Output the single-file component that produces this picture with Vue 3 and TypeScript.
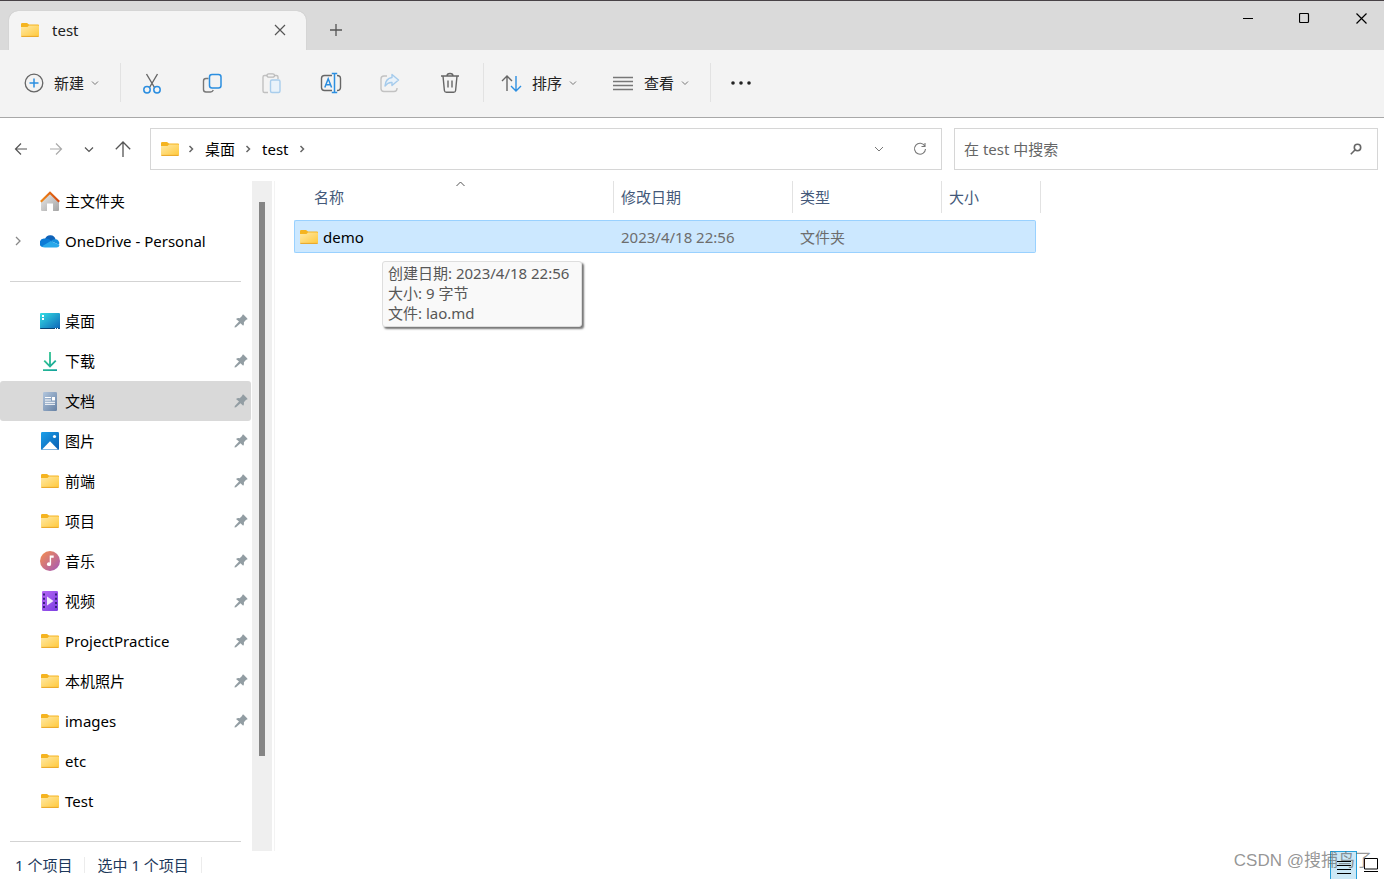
<script setup lang="ts">
import { ref } from 'vue'

interface Place {
  label: string
  icon: string
  pinned: boolean
}

const places: Place[] = [
  { label: '桌面', icon: 'desktop', pinned: true },
  { label: '下载', icon: 'download', pinned: true },
  { label: '文档', icon: 'document', pinned: true },
  { label: '图片', icon: 'picture', pinned: true },
  { label: '前端', icon: 'folder', pinned: true },
  { label: '项目', icon: 'folder', pinned: true },
  { label: '音乐', icon: 'music', pinned: true },
  { label: '视频', icon: 'video', pinned: true },
  { label: 'ProjectPractice', icon: 'folder', pinned: true },
  { label: '本机照片', icon: 'folder', pinned: true },
  { label: 'images', icon: 'folder', pinned: true },
  { label: 'etc', icon: 'folder', pinned: false },
  { label: 'Test', icon: 'folder', pinned: false },
]

const tools = [
  { id: 'cut', label: '剪切', disabled: false },
  { id: 'copy', label: '复制', disabled: false },
  { id: 'paste', label: '粘贴', disabled: true },
  { id: 'rename', label: '重命名', disabled: false },
  { id: 'share', label: '共享', disabled: true },
  { id: 'trash', label: '删除', disabled: false },
]

const current = ref('文档')
const query = ref('')
</script>

<template>
  <div class="window">
    <svg class="sprite" aria-hidden="true">
      <defs>
        <linearGradient id="g-folder" x1="0" y1="0" x2="1" y2="1">
          <stop offset="0" stop-color="#ffe9a6" />
          <stop offset="1" stop-color="#ffc93c" />
        </linearGradient>
        <linearGradient id="g-desktop" x1="0" y1="0" x2="1" y2="1">
          <stop offset="0" stop-color="#35dfe4" />
          <stop offset="1" stop-color="#0d63b8" />
        </linearGradient>
        <linearGradient id="g-download" x1="0" y1="0" x2="1" y2="1">
          <stop offset="0" stop-color="#3ccf8e" />
          <stop offset="1" stop-color="#109f9c" />
        </linearGradient>
        <linearGradient id="g-document" x1="0" y1="0" x2="1" y2="1">
          <stop offset="0" stop-color="#b2c6dd" />
          <stop offset="1" stop-color="#6681a4" />
        </linearGradient>
        <linearGradient id="g-picture" x1="0" y1="0" x2="1" y2="1">
          <stop offset="0" stop-color="#1ca0ea" />
          <stop offset="1" stop-color="#085cb0" />
        </linearGradient>
        <linearGradient id="g-music" x1="0" y1="0" x2="1" y2="1">
          <stop offset="0.1" stop-color="#ef8a57" />
          <stop offset="0.9" stop-color="#ab5db0" />
        </linearGradient>
        <linearGradient id="g-video" x1="0" y1="0" x2="1" y2="1">
          <stop offset="0" stop-color="#b566f5" />
          <stop offset="1" stop-color="#7b3fe0" />
        </linearGradient>
        <linearGradient id="g-home" x1="0" y1="0" x2="1" y2="1">
          <stop offset="0" stop-color="#ebebeb" />
          <stop offset="1" stop-color="#a4a4a4" />
        </linearGradient>
        <linearGradient id="g-roof" x1="0" y1="0" x2="1" y2="0">
          <stop offset="0" stop-color="#f08a18" />
          <stop offset="1" stop-color="#d4470f" />
        </linearGradient>
      </defs>
      <symbol id="i-folder" viewBox="0 0 20 20">
        <path d="M1 4.200Q1 3 2.200 3H7l2 1.500h9q1 0 1 1V8H1z" fill="#f5b420" />
        <path d="M1 7h6.500l1.500-1.500h9q1 0 1 1v9q0 1-1 1H2q-1 0-1-1z" fill="url(#g-folder)" />
        <path d="M1.300 16.400h17.400" stroke="#e9a420" stroke-width="1" />
      </symbol>
      <symbol id="i-desktop" viewBox="0 0 20 20">
        <rect y="2" width="20" height="16" rx="1" fill="url(#g-desktop)" />
        <path d="M0 17h20q0 1-1 1H1q-1 0-1-1z" fill="#0a4372" />
        <path d="M2 4h2v2H2zM2 7h2v2H2zM15 17h1v1h-1zM17 17h1v1h-1z" fill="#fff" />
      </symbol>
      <symbol id="i-download" viewBox="0 0 20 20">
        <path d="M9.100 1h1.800v12.200l4.200-4.200 1.300 1.300L10 16.700 3.600 10.300 4.900 9l4.200 4.200zM3 18.300h14V20H3z" fill="url(#g-download)" />
      </symbol>
      <symbol id="i-document" viewBox="0 0 20 20">
        <rect x="3" y="1" width="14" height="19" rx="1.200" fill="url(#g-document)" />
        <path d="M5 6.500h6M5 9h6M5 11.300h10M5 13.300h10" stroke="#fff" stroke-width="1" />
        <path d="M12 6h3v3.500h-3z" fill="#fff" />
      </symbol>
      <symbol id="i-picture" viewBox="0 0 20 20">
        <rect x="1" y="1" width="18" height="18" rx="1.200" fill="url(#g-picture)" />
        <path d="M2 18.500 10 10.200l8 8.300z" fill="#fff" />
        <circle cx="14.500" cy="5.500" r="1.600" fill="#fff" />
      </symbol>
      <symbol id="i-music" viewBox="0 0 20 20">
        <circle cx="10" cy="10" r="10" fill="url(#g-music)" />
        <path d="M9.700 4.500h4v2.200h-2.600v6.500a2.100 1.900 0 1 1-1.400-1.800z" fill="#fff" />
      </symbol>
      <symbol id="i-video" viewBox="0 0 20 20">
        <rect x="2" width="16" height="20" rx="1.200" fill="url(#g-video)" />
        <path d="M3 2.500h2v2H3zM3 6.700h2v2H3zM3 10.900h2v2H3zM3 15.100h2v2H3zM15 2.500h2v2h-2zM15 6.700h2v2h-2zM15 10.900h2v2h-2zM15 15.100h2v2h-2z" fill="#3b2080" />
        <path d="M7 5.500v9l6.500-4.500z" fill="#f2ecfb" />
      </symbol>
      <symbol id="i-home" viewBox="0 0 20 20">
        <path d="M1 10 10 2l9 8v9q0 1-1 1h-5v-7.500H7V20H2q-1 0-1-1z" fill="url(#g-home)" />
        <path d="M.8 10.800 10 1.800l9.200 9" fill="none" stroke="url(#g-roof)" stroke-width="2.200" />
      </symbol>
      <symbol id="i-cloud" viewBox="0 0 20 20">
        <path d="M5 8a5.500 5.500 0 0 1 10.600 0.500L10 12z" fill="#0f62b8" />
        <path d="M4.800 7.500c3-.5 5 1 7 2.500L3 16.300A4.500 4.500 0 0 1 4.800 7.500z" fill="#0b7bd6" />
        <path d="M14.500 8.300a4 4 0 0 1 4.500 5.500L11 10q1.500-1.500 3.500-1.700z" fill="#1490df" />
        <path d="M2 15.200 10.800 10 19.500 14a3 3 0 0 1-3 2.500H5q-2 0-3-1.300z" fill="#28a8ea" />
      </symbol>
      <symbol id="i-pin" viewBox="0 0 14 14">
        <path d="M8.500.8q.6-.6 1.200 0l3.600 3.600q.5.700-.2 1.200l-1 .2-2.200 2.500q.5 2-.7 3.500L6.500 9.200 2 13.300l-1.500.3.300-1.500L5 7.600 2 4.900q1.700-1.200 3.700-.7L8 2z" fill="#929da3" />
      </symbol>
      <symbol id="i-chev" viewBox="0 0 8 8">
        <path d="M1 2.500 4 5.500l3-3" fill="none" stroke="currentColor" />
      </symbol>
      <symbol id="i-right" viewBox="0 0 6 8">
        <path d="M1.500 1 4.500 4l-3 3" fill="none" stroke="currentColor" stroke-width="1.500" />
      </symbol>
      <symbol id="i-cut" viewBox="0 0 24 24">
        <path d="M6.500 3 14.800 17M17.500 3 9.200 17" fill="none" stroke="#666" stroke-width="1.400" />
        <g fill="none" stroke="#2b8ee0" stroke-width="1.500">
          <circle cx="7" cy="18.800" r="3.200" /><circle cx="17" cy="18.800" r="3.200" />
        </g>
      </symbol>
      <symbol id="i-copy" viewBox="0 0 24 24">
        <path d="M8.500 7.500H6Q3.500 7.500 3.500 10v8.500q0 2.500 2.500 2.500h4.500q2 0 2.800-2" fill="none" stroke="#777" stroke-width="1.400" />
        <rect x="9.500" y="3.500" width="11.500" height="13.500" rx="2.500" fill="#f3f3f3" stroke="#2b8ee0" stroke-width="1.500" />
      </symbol>
      <symbol id="i-paste" viewBox="0 0 24 24">
        <path d="M8 4.500H5.500q-1.500 0-1.500 1.500v14q0 1.500 1.500 1.500H9M15.500 4.500h2q1.500 0 1.500 1.500v2" fill="none" stroke="#c0c0c0" stroke-width="1.400" />
        <rect x="8" y="2.800" width="7.500" height="3.400" rx="1.700" fill="#f3f3f3" stroke="#bbb" stroke-width="1.300" />
        <rect x="11.500" y="9" width="9.500" height="12.500" rx="1.500" fill="#e9f2fa" stroke="#a9cdec" stroke-width="1.400" />
      </symbol>
      <symbol id="i-rename" viewBox="0 0 24 24">
        <path d="M13 4.500H5.500Q2.500 4.500 2.500 7.500v9q0 3 3 3H13M18 4.500q3.500 0 3.500 3v9q0 3-3.500 3" fill="none" stroke="#666" stroke-width="1.400" />
        <path d="M5.800 16.500 9.200 7.800l3.400 8.700M6.900 13.800h4.600M15.500 2.500v19M12.800 2.600h5.400M12.800 21.400h5.400" fill="none" stroke="#2b8ee0" stroke-width="1.500" />
      </symbol>
      <symbol id="i-share" viewBox="0 0 24 24">
        <path d="M9 5H6Q3 5 3 8v9.500q0 3 3 3h10q3 0 3-3V17" fill="none" stroke="#c2c2c2" stroke-width="1.400" />
        <path d="M14 3.500 20.500 9 14 14.500v-3q-4-.5-7 3.500.5-7.500 7-8.500z" fill="#e9f2fa" stroke="#a5cbec" stroke-width="1.400" stroke-linejoin="round" />
      </symbol>
      <symbol id="i-trash" viewBox="0 0 24 24">
        <path d="M3 5h18M9 5q0-2.500 3-2.500T15 5M5 5l1.400 14.500q.2 1.800 2 1.800h7.200q1.800 0 2-1.800L19 5M10 9.500v7M14 9.500v7" fill="none" stroke="#666" stroke-width="1.400" />
      </symbol>
    </svg>

    <header class="titlebar">
      <div class="tab">
        <svg class="icon"><use href="#i-folder" /></svg>
        <span class="tab-name">test</span>
        <button class="plain" aria-label="关闭标签页">
          <svg width="12" height="12"><path d="M1 1 11 11M11 1 1 11" stroke="#555" stroke-width="1.200" /></svg>
        </button>
      </div>
      <button class="plain add" aria-label="新标签页">
        <svg width="12" height="12"><path d="M6 0V12M0 6H12" stroke="#555" stroke-width="1.300" /></svg>
      </button>
      <div class="controls">
        <button class="plain" aria-label="最小化"><svg width="11" height="11"><path d="M1 5.500h10" stroke="#000" /></svg></button>
        <button class="plain" aria-label="最大化"><svg width="11" height="11"><rect x=".5" y=".5" width="9" height="9" rx="1" fill="none" stroke="#000" stroke-width="1.200" /></svg></button>
        <button class="plain" aria-label="关闭"><svg width="11" height="11"><path d="M.5.500l10 10M10.500.5l-10 10" stroke="#000" stroke-width="1.200" /></svg></button>
      </div>
    </header>

    <div class="toolbar">
      <button class="plain menu">
        <svg width="20" height="20" class="lead">
          <circle cx="10" cy="10" r="8.800" fill="none" stroke="#666" stroke-width="1.300" />
          <path d="M10 5.500v9M5.500 10h9" stroke="#2b8ee0" stroke-width="1.500" />
        </svg>
        <span>新建</span>
        <svg class="chev"><use href="#i-chev" /></svg>
      </button>
      <i class="sep"></i>
      <div class="tools">
        <button v-for="t in tools" :key="t.id" class="plain" :aria-label="t.label" :disabled="t.disabled">
          <svg width="24" height="24"><use :href="'#i-' + t.id" /></svg>
        </button>
      </div>
      <i class="sep"></i>
      <button class="plain menu sort">
        <svg width="21" height="20" class="lead">
          <path d="M6 18V3M1 8l5-5 5 5" fill="none" stroke="#666" stroke-width="1.400" />
          <path d="M15 3v15M10 13l5 5 5-5" fill="none" stroke="#2b8ee0" stroke-width="1.400" />
        </svg>
        <span>排序</span>
        <svg class="chev"><use href="#i-chev" /></svg>
      </button>
      <button class="plain menu view">
        <svg width="21" height="20" class="lead">
          <path d="M0 4.500h20M0 8.500h20M0 12.500h20M0 16.500h20" stroke="#777" stroke-width="1.300" />
        </svg>
        <span>查看</span>
        <svg class="chev"><use href="#i-chev" /></svg>
      </button>
      <i class="sep"></i>
      <button class="plain more" aria-label="更多">
        <svg width="20" height="6" fill="#222"><circle cx="2" cy="3" r="1.800" /><circle cx="10" cy="3" r="1.800" /><circle cx="18" cy="3" r="1.800" /></svg>
      </button>
    </div>

    <div class="navbar">
      <div class="history">
        <button class="plain" aria-label="后退"><svg width="14" height="14"><path d="M13 7H1.500M7 1.500 1.500 7 7 12.500" fill="none" stroke="#555" stroke-width="1.200" /></svg></button>
        <button class="plain" aria-label="前进"><svg width="14" height="14"><path d="M1 7h11.500M7 1.500 12.500 7 7 12.500" fill="none" stroke="#aaa" stroke-width="1.200" /></svg></button>
        <button class="plain" aria-label="最近位置"><svg width="10" height="14"><path d="M1 5.500l4 4 4-4" fill="none" stroke="#555" stroke-width="1.200" /></svg></button>
        <button class="plain" aria-label="向上"><svg width="16" height="16"><path d="M8 16V1M.8 8.200 8 1l7.200 7.200" fill="none" stroke="#555" stroke-width="1.300" /></svg></button>
      </div>
      <nav class="address" aria-label="地址">
        <svg class="icon"><use href="#i-folder" /></svg>
        <svg class="right"><use href="#i-right" /></svg>
        <a href="#desktop">桌面</a>
        <svg class="right"><use href="#i-right" /></svg>
        <a href="#test">test</a>
        <svg class="right"><use href="#i-right" /></svg>
        <button class="plain drop" aria-label="历史地址"><svg width="10" height="10"><path d="M1 3l4 4 4-4" fill="none" stroke="#777" /></svg></button>
        <button class="plain" aria-label="刷新"><svg width="14" height="14"><path d="M11.800 4A5.500 5.500 0 1 0 12.500 7M12 1v3.500H8.500" fill="none" stroke="#777" stroke-width="1.100" /></svg></button>
      </nav>
      <label class="search">
        <input v-model="query" type="text" placeholder="在 test 中搜索" aria-label="在 test 中搜索" />
        <svg width="12" height="12"><circle cx="7.500" cy="4.500" r="3.200" fill="none" stroke="#666" stroke-width="1.600" /><path d="M5.200 6.800.8 11.200" stroke="#666" stroke-width="1.600" /></svg>
      </label>
    </div>

    <div class="body">
      <aside class="sidebar">
        <button class="plain place">
          <span class="expander"></span>
          <svg class="icon"><use href="#i-home" /></svg>
          <span>主文件夹</span>
        </button>
        <button class="plain place">
          <span class="expander"><svg width="6" height="10"><path d="M1 1l4 4-4 4" fill="none" stroke="#888" stroke-width="1.300" /></svg></span>
          <svg class="icon"><use href="#i-cloud" /></svg>
          <span>OneDrive - Personal</span>
        </button>
        <hr />
        <button
          v-for="p in places"
          :key="p.label"
          class="plain place"
          :class="{ current: p.label === current }"
          @click="current = p.label"
        >
          <span class="expander"></span>
          <svg class="icon"><use :href="'#i-' + p.icon" /></svg>
          <span>{{ p.label }}</span>
          <svg v-if="p.pinned" class="pin"><use href="#i-pin" /></svg>
        </button>
        <hr />
      </aside>
      <div class="scrollbar"><div class="thumb"></div></div>

      <main class="files">
        <table>
          <colgroup><col class="c-name" /><col class="c-date" /><col class="c-type" /><col class="c-size" /></colgroup>
          <thead>
            <tr>
              <th>名称<svg class="sorted" width="9" height="6"><path d="M.5 5l4-4 4 4" fill="none" stroke="#555" /></svg></th>
              <th>修改日期</th>
              <th>类型</th>
              <th>大小</th>
            </tr>
          </thead>
          <tbody>
            <tr>
              <td><div class="file"><svg class="icon"><use href="#i-folder" /></svg><span>demo</span></div></td>
              <td>2023/4/18 22:56</td>
              <td>文件夹</td>
              <td></td>
            </tr>
          </tbody>
        </table>
        <div class="tooltip" role="tooltip">
          <div>创建日期: 2023/4/18 22:56</div>
          <div>大小: 9 字节</div>
          <div>文件: lao.md</div>
        </div>
      </main>
    </div>

    <footer class="status">
      <span class="stat">1 个项目</span>
      <span class="stat">选中 1 个项目</span>
      <div class="views">
        <button class="plain details" aria-label="详细信息"><svg width="14" height="14"><path d="M0 .5h14M0 4.500h14M0 8.500h14M0 12.500h14" stroke="#000" /></svg></button>
        <button class="plain" aria-label="大图标"><svg width="14" height="15"><path d="M.5.500h13v10.500H.5zM0 13.500h14" fill="none" stroke="#000" /></svg></button>
      </div>
    </footer>
    <div class="watermark">CSDN @搜捕鸟了</div>
  </div>
</template>

<style>
body {
  margin: 0;
}
</style>

<style scoped>
.window {
  position: relative;
  display: flex;
  flex-direction: column;
  height: 100vh;
  overflow: hidden;
  box-sizing: border-box;
  border-top: 1px solid #484246;
  background: #fff;
  color: #000;
  font: 15px/20px "Noto Sans", "Noto Sans CJK SC", sans-serif;
}
.sprite {
  position: absolute;
  width: 0;
  height: 0;
}
.plain {
  display: flex;
  align-items: center;
  justify-content: center;
  padding: 0;
  border: 0;
  background: none;
  color: inherit;
  font: inherit;
}
svg {
  display: block;
  flex: none;
}
.icon {
  width: 20px;
  height: 20px;
}
.titlebar {
  display: flex;
  flex: none;
  height: 49px;
  background: #dadada;
}
.tab {
  display: flex;
  align-items: center;
  width: 297px;
  box-sizing: border-box;
  margin: 10px 0 0 9px;
  padding: 0 20px 2px 11px;
  border-radius: 9px 9px 0 0;
  background: #f4f4f4;
  box-shadow: 0 0 1px #aaa;
}
.tab-name {
  flex: 1;
  margin-left: 12px;
  color: #222;
}
.add {
  width: 60px;
  padding-top: 9px;
}
.controls {
  display: flex;
  height: 34px;
  margin-left: auto;
}
.controls .plain {
  width: 57px;
}
.controls .plain:last-child {
  width: 45px;
  margin-left: 6px;
}
.toolbar {
  display: flex;
  align-items: center;
  flex: none;
  height: 65px;
  padding: 0 0 2px 24px;
  border-bottom: 1px solid #a8a8a8;
  background: #f3f3f3;
  color: #222;
}
.menu .lead {
  margin-right: 10px;
}
.chev {
  width: 8px;
  height: 8px;
  margin-left: 7px;
  color: #777;
}
.sep {
  flex: none;
  width: 1px;
  height: 39px;
  background: #e2e2e2;
}
.menu + .sep {
  margin-left: 21px;
}
.tools {
  display: flex;
  justify-content: space-between;
  width: 322px;
  margin: 0 21px 0 19px;
}
.sort {
  margin-left: 17px;
}
.view {
  margin-left: 36px;
}
.more {
  margin-left: 20px;
}
.navbar {
  display: flex;
  align-items: center;
  flex: none;
  height: 61px;
  padding: 0 6px 2px 0;
}
.history {
  display: flex;
  align-items: center;
  flex: none;
  gap: 21px;
  width: 136px;
  padding-left: 14px;
}
.address {
  display: flex;
  align-items: center;
  flex: 767 1 0;
  height: 42px;
  box-sizing: border-box;
  margin-right: 12px;
  padding: 0 14px 0 9px;
  border: 1px solid #d6d6d6;
}
.address a {
  color: #000;
  text-decoration: none;
}
.right {
  width: 6px;
  height: 8px;
  margin: 0 11px 0 8px;
  color: #666;
}
.address a + .right {
  margin-left: 10px;
}
.drop {
  margin: 0 29px 0 auto;
}
.search {
  display: flex;
  align-items: center;
  flex: 398 1 0;
  height: 42px;
  box-sizing: border-box;
  padding: 0 15px 0 9px;
  border: 1px solid #d6d6d6;
}
.search input {
  flex: 1;
  min-width: 0;
  padding: 0;
  border: 0;
  outline: 0;
  background: none;
  font: inherit;
}
.search input::placeholder {
  color: #666;
  opacity: 1;
}
.body {
  display: flex;
  flex: 1;
  min-height: 0;
}
.sidebar {
  flex: none;
  width: 252px;
  overflow: hidden;
}
.place {
  justify-content: flex-start;
  width: 251px;
  height: 40px;
  border-radius: 3px;
  padding-right: 3px;
}
.place.current {
  background: #d9d9d9;
}
.expander {
  width: 25px;
  padding-left: 15px;
}
.place .icon {
  margin-right: 5px;
}
.pin {
  width: 14px;
  height: 14px;
  margin-left: auto;
}
.sidebar hr {
  height: 1px;
  margin: 20px 11px 19px 10px;
  border: 0;
  background: #d3d3d3;
}
.scrollbar {
  flex: none;
  width: 20px;
  box-sizing: border-box;
  padding: 21px 7px 95px;
  background: #efefef;
}
.thumb {
  height: 100%;
  background: #858585;
}
.files {
  position: relative;
  flex: 1;
  margin-left: 2px;
  padding-left: 19px;
  border-left: 1px solid #f3f3f3;
}
table {
  width: 742px;
  table-layout: fixed;
  border-collapse: separate;
  border-spacing: 0;
}
.c-name {
  width: 320px;
}
.c-date {
  width: 179px;
}
.c-type {
  width: 149px;
}
th {
  position: relative;
  height: 31px;
  padding: 0 0 8px 7px;
  color: #44597a;
  font-weight: 400;
  text-align: left;
}
th:first-child {
  padding-left: 20px;
}
th::after {
  content: "";
  position: absolute;
  top: 0;
  right: 0;
  width: 1px;
  height: 32px;
  background: #e2e2e2;
}
th:last-child::after {
  right: -5px;
}
.sorted {
  position: absolute;
  top: 0;
  left: 162px;
}
td {
  height: 31px;
  padding: 0 0 0 7px;
  border: solid #99d1ff;
  border-width: 1px 0;
  background: #cce8ff;
  color: #6d6d6d;
}
td:first-child {
  padding-left: 4px;
  border-left-width: 1px;
  border-radius: 2px 0 0 2px;
  color: #000;
}
td:last-child {
  border-right-width: 1px;
  border-radius: 0 2px 2px 0;
}
.file {
  display: flex;
  align-items: center;
  gap: 4px;
}
.tooltip {
  position: absolute;
  top: 80px;
  left: 107px;
  padding: 1px 12px 3px 5px;
  border: 1px solid #dedede;
  border-radius: 3px;
  background: #f9f9f9;
  box-shadow: 2px 2px 2px #777;
  color: #575757;
  white-space: nowrap;
}
.status {
  display: flex;
  flex: none;
  height: 28px;
  padding-left: 3px;
  color: #1e395b;
}
.stat {
  height: 16px;
  margin-top: 6px;
  padding: 0 12px;
  border-right: 1px solid #ececec;
  line-height: 16px;
}
.views {
  display: flex;
  margin-left: auto;
}
.views .plain {
  width: 27px;
}
.views .details {
  box-sizing: border-box;
  border: 1px solid #26a0da;
  border-bottom: 0;
  background: #cbe8f6;
  padding-top: 4px;
}
.watermark {
  position: absolute;
  right: 12px;
  bottom: 6px;
  color: rgba(90, 90, 90, 0.65);
  font: 17px/24px "Liberation Sans", "Noto Sans CJK SC", sans-serif;
  pointer-events: none;
}
</style>
